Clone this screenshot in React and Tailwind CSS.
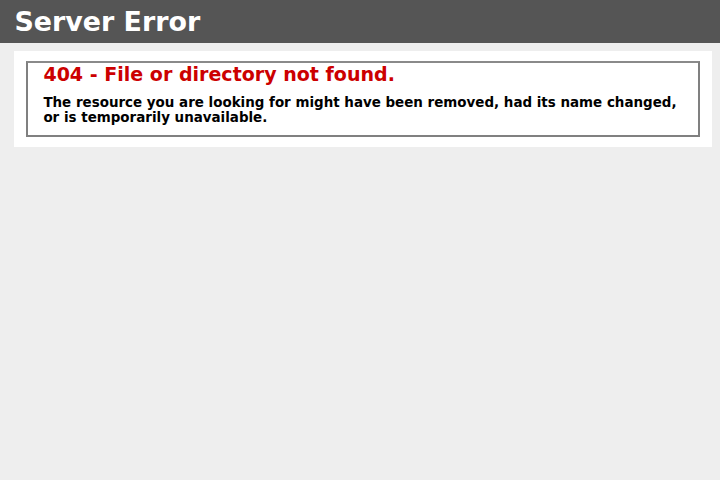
export default function App() {
  return (
    <div className="min-h-[480px] bg-[#eeeeee] text-[11.2px] font-['DejaVu_Sans',Verdana,sans-serif]">
      {/* header */}
      <div className="bg-[#555555] px-[2%] py-[6px] text-white">
        <h1 className="text-[26.88px] font-bold leading-[31px]">Server Error</h1>
      </div>

      <div className="ml-[2%]">
        <div className="box-content mt-2 w-[96%] bg-white p-[10px]">
          <div className="mx-0.5 border-2 border-[#808080] border-t-[#8a8a8a] px-[15px] pb-[10px]">
            <h2 className="text-[19.04px] font-bold leading-[23px] text-[#cc0000]">
              404 - File or directory not found.
            </h2>
            <h3 className="mt-[9px] text-[13.44px] font-bold leading-[15px] text-black">
              The resource you are looking for might have been removed, had its name changed, or is
              temporarily unavailable.
            </h3>
          </div>
        </div>
      </div>
    </div>
  );
}
